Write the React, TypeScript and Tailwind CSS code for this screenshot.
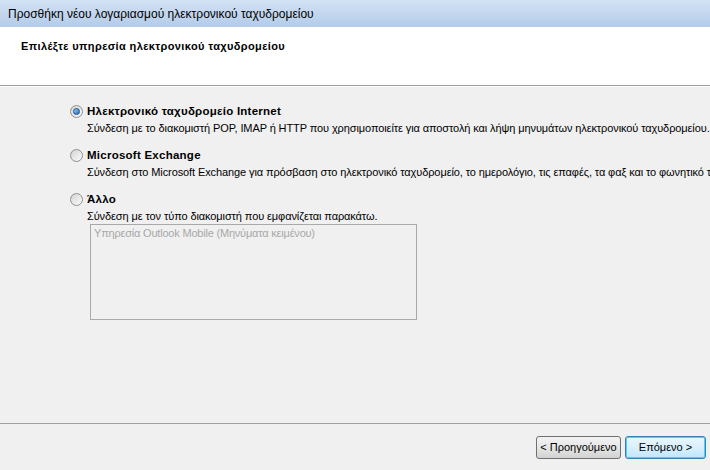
import React from "react";

const font = { fontFamily: '"Liberation Sans", Arial, sans-serif' };

function Radio({ checked }: { checked?: boolean }) {
  return (
    <span className="flex h-[13px] w-[13px] shrink-0 items-center justify-center rounded-full border border-[#8f8f8f] bg-gradient-to-br from-[#d4d4d4] to-[#fbfbfb]">
      {checked && (
        <span className="h-[7px] w-[7px] rounded-full border border-[#1b4d82] bg-gradient-to-br from-[#8fd0ff] to-[#1a6fc0]" />
      )}
    </span>
  );
}

function Option({
  title,
  desc,
  checked,
}: {
  title: string;
  desc: string;
  checked?: boolean;
}) {
  return (
    <div className="flex flex-col">
      <div className="flex items-center gap-[4px]">
        <Radio checked={checked} />
        <span className="text-[11.5px] font-bold leading-[14px] tracking-[0.25px] text-black">{title}</span>
      </div>
      <div className="whitespace-nowrap pl-[17px] pt-[4px] text-[11px] leading-[13px] tracking-[-0.1px] text-black">
        {desc}
      </div>
    </div>
  );
}

export default function App() {
  return (
    <div className="flex h-[470px] w-[710px] flex-col overflow-hidden bg-[#f0f0f0]" style={font}>
      {/* Title bar */}
      <div className="flex h-[27px] items-center bg-gradient-to-b from-[#d3e2f4] to-[#b3cbe8] pl-[8px] text-[12px] text-black">
        Προσθήκη νέου λογαριασμού ηλεκτρονικού ταχυδρομείου
      </div>

      {/* Header */}
      <div className="h-[59px] border-b border-[#a0a0a0] bg-white pl-[21px] pt-[11px] text-[11px] font-bold tracking-[0.37px] text-black">
        Επιλέξτε υπηρεσία ηλεκτρονικού ταχυδρομείου
      </div>

      {/* Body */}
      <div className="flex flex-1 flex-col border-t border-white pl-[70px] pt-[17px]">
        <div className="flex flex-col gap-[13px]">
          <Option
            checked
            title="Ηλεκτρονικό ταχυδρομείο Internet"
            desc="Σύνδεση με το διακομιστή POP, IMAP ή HTTP που χρησιμοποιείτε για αποστολή και λήψη μηνυμάτων ηλεκτρονικού ταχυδρομείου."
          />
          <Option
            title="Microsoft Exchange"
            desc="Σύνδεση στο Microsoft Exchange για πρόσβαση στο ηλεκτρονικό ταχυδρομείο, το ημερολόγιο, τις επαφές, τα φαξ και το φωνητικό ταχυδρομείο."
          />
          <Option
            title="Άλλο"
            desc="Σύνδεση με τον τύπο διακομιστή που εμφανίζεται παρακάτω."
          />
        </div>
        <div className="ml-[20px] mt-[1px] h-[96px] w-[327px] border border-[#a9a9a9] bg-[#f0f0f0] px-[3px] pt-[2px] text-[11px] leading-[13px] tracking-[-0.2px] text-[#a8a8a8]">
          Υπηρεσία Outlook Mobile (Μηνύματα κειμένου)
        </div>
      </div>

      {/* Footer */}
      <div className="flex h-[47px] items-start justify-end gap-[4px] border-t border-[#a0a0a0] pr-[4px] pt-[12px]">
        <button className="flex h-[23px] w-[85px] items-center justify-center rounded-[3px] border border-[#707070] bg-gradient-to-b from-[#f2f2f2] via-[#e6e6e6] to-[#d2d2d2] text-[11px] text-black">
          &lt; Προηγούμενο
        </button>
        <button className="flex h-[23px] w-[81px] items-center justify-center rounded-[3px] border border-[#3c7fb1] bg-gradient-to-b from-[#eaf6fd] via-[#d9f0fc] to-[#bee6fd] text-[11px] text-black shadow-[inset_0_0_0_1px_#48d1ff]">
          Επόμενο &gt;
        </button>
      </div>
    </div>
  );
}
